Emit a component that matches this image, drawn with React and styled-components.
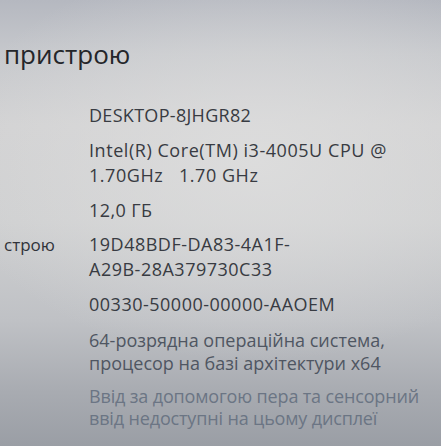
import React from 'react';
import styled, { createGlobalStyle } from 'styled-components';

const GlobalStyle = createGlobalStyle`
  html, body {
    margin: 0;
    padding: 0;
  }
  body {
    font-family: 'Open Sans', 'Noto Sans', sans-serif;
  }
`;

const Screen = styled.div`
  width: 441px;
  height: 446px;
  overflow: hidden;
  box-sizing: border-box;
  padding: 35px 0 0 4px;
  background:
    radial-gradient(ellipse 70% 45% at 58% 36%, rgba(222, 222, 222, 0.85), rgba(222, 222, 222, 0) 100%),
    linear-gradient(
      180deg,
      #b5b8c0 0%,
      #c6c8cc 12%,
      #d2d2d3 28%,
      #cfd0d1 50%,
      #bfc1c5 72%,
      #a8abb1 88%,
      #9a9ea5 100%
    );
`;

const Heading = styled.h2`
  margin: 0;
  font-size: 26px;
  font-weight: 400;
  color: #24262a;
  line-height: 38px;
`;

const Specs = styled.div`
  display: grid;
  grid-template-columns: 85px 1fr;
  row-gap: 10px;
  margin-top: 29px;
`;

const Label = styled.div`
  margin-top: ${(p) => p.$mt || 0}px;
  font-size: 17px;
  line-height: ${(p) => p.$lh}px;
  color: #30333a;
`;

const Value = styled.div`
  margin-top: ${(p) => p.$mt || 0}px;
  font-size: 18px;
  line-height: ${(p) => p.$lh}px;
  color: ${(p) => p.$color || '#383b42'};
  white-space: pre-wrap;
  letter-spacing: ${(p) => p.$spacing || 0}px;
`;

const rows = [
  { label: '', value: 'DESKTOP-8JHGR82', lh: 26, spacing: 0.3 },
  {
    label: '',
    value: 'Intel(R) Core(TM) i3-4005U CPU @\n1.70GHz   1.70 GHz',
    lh: 25,
    spacing: 0.55,
  },
  { label: '', value: '12,0 ГБ', lh: 24, spacing: 0.4 },
  {
    label: 'строю',
    value: '19D48BDF-DA83-4A1F-\nA29B-28A379730C33',
    lh: 25,
    spacing: 0.5,
  },
  { label: '', value: '00330-50000-00000-AAOEM', lh: 24, spacing: 0.5 },
  {
    label: '',
    value: '64-розрядна операційна система,\nпроцесор на базі архітектури x64',
    lh: 23,
    mt: 3,
    color: '#4f5662',
  },
  {
    label: '',
    value: 'Ввід за допомогою пера та сенсорний\nввід недоступні на цьому дисплеї',
    lh: 22,
    spacing: -0.15,
    color: '#6b7584',
  },
];

const App = () => {
  return (
    <>
      <GlobalStyle />
      <Screen>
        <Heading>пристрою</Heading>
        <Specs>
          {rows.map((row, i) => (
            <React.Fragment key={i}>
              <Label $lh={row.lh} $mt={row.mt}>
                {row.label}
              </Label>
              <Value
                $lh={row.lh}
                $mt={row.mt}
                $color={row.color}
                $spacing={row.spacing}
              >
                {row.value}
              </Value>
            </React.Fragment>
          ))}
        </Specs>
      </Screen>
    </>
  );
};

export default App;
